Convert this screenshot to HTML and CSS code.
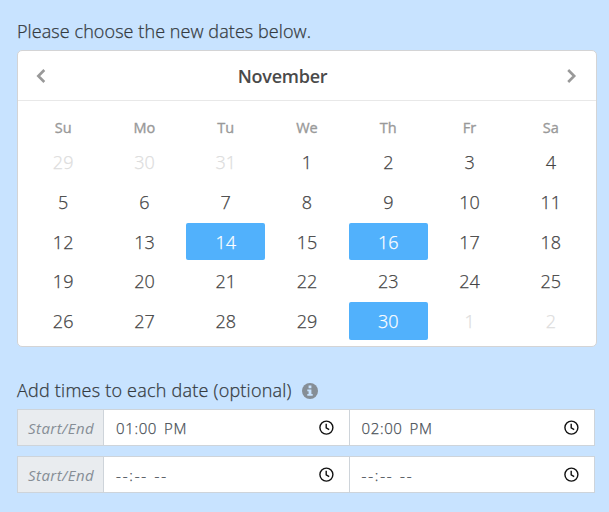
FILE: index.html
```html
<!DOCTYPE html>
<html lang="en">
<head>
    <meta charset="UTF-8">
    <meta name="viewport" content="width=device-width, initial-scale=1.0">
    <title>Choose dates</title>
    <link rel="stylesheet" href="styles.css">
</head>
<body>
    <div class="container">
        <div class="form-label"><span class="dates-label">Please choose the new dates below.</span></div>

        <!-- Calendar -->
        <div class="calendar">
            <div class="calendar-header">
                <svg class="arrow" viewBox="0 0 10 14"><path d="M8.3 1 2.3 7l6 6"/></svg>
                <div class="calendar-title">November</div>
                <svg class="arrow" viewBox="0 0 10 14"><path d="M1.2 1l6 6-6 6"/></svg>
            </div>
            <div class="weekdays">
                <div>Su</div><div>Mo</div><div>Tu</div><div>We</div><div>Th</div><div>Fr</div><div>Sa</div>
            </div>
            <div class="days">
                <div class="day muted">29</div>
                <div class="day muted">30</div>
                <div class="day muted">31</div>
                <div class="day">1</div>
                <div class="day">2</div>
                <div class="day">3</div>
                <div class="day">4</div>
                <div class="day">5</div>
                <div class="day">6</div>
                <div class="day">7</div>
                <div class="day">8</div>
                <div class="day">9</div>
                <div class="day">10</div>
                <div class="day">11</div>
                <div class="day">12</div>
                <div class="day">13</div>
                <div class="day selected">14</div>
                <div class="day">15</div>
                <div class="day selected">16</div>
                <div class="day">17</div>
                <div class="day">18</div>
                <div class="day">19</div>
                <div class="day">20</div>
                <div class="day">21</div>
                <div class="day">22</div>
                <div class="day">23</div>
                <div class="day">24</div>
                <div class="day">25</div>
                <div class="day">26</div>
                <div class="day">27</div>
                <div class="day">28</div>
                <div class="day">29</div>
                <div class="day selected">30</div>
                <div class="day muted">1</div>
                <div class="day muted">2</div>
            </div>
        </div>

        <!-- Times -->
        <div class="form-label times-row">
            <span class="times-label">Add times to each date (optional)</span>
            <svg class="info" viewBox="0 0 16 16"><circle cx="8" cy="8" r="8"/><path d="M6.6 2.6h2.8v2.6H6.6zM5.3 6.4h4.1v4.5h1.3v1.9H5.3v-1.9h1.3V8.2H5.3z"/></svg>
        </div>
        <div class="time-group">
            <div class="addon"><span>Start/End</span></div>
            <div class="time-input">
                <span class="time">01:00 PM</span>
                <svg class="clock" viewBox="0 0 16 16"><circle cx="8.4" cy="7.6" r="6.5"/><path d="M8.2 3.8v4.1l3 1.8"/></svg>
            </div>
            <div class="time-input">
                <span class="time">02:00 PM</span>
                <svg class="clock" viewBox="0 0 16 16"><circle cx="8.4" cy="7.6" r="6.5"/><path d="M8.2 3.8v4.1l3 1.8"/></svg>
            </div>
        </div>
        <div class="time-group">
            <div class="addon"><span>Start/End</span></div>
            <div class="time-input">
                <span class="time empty">--:-- --</span>
                <svg class="clock" viewBox="0 0 16 16"><circle cx="8.4" cy="7.6" r="6.5"/><path d="M8.2 3.8v4.1l3 1.8"/></svg>
            </div>
            <div class="time-input">
                <span class="time empty">--:-- --</span>
                <svg class="clock" viewBox="0 0 16 16"><circle cx="8.4" cy="7.6" r="6.5"/><path d="M8.2 3.8v4.1l3 1.8"/></svg>
            </div>
        </div>
    </div>
</body>
</html>
```
FILE: styles.css
```css
* {
    box-sizing: border-box;
}
body {
    margin: 0;
    background: #c8e3ff;
    color: #343a40;
    font-family: "Open Sans", "Noto Sans", sans-serif;
    font-weight: 300;
    font-size: 18px;
}
.container {
    width: 580px;
    margin-left: 17px;
    padding-top: 18px;
}
.form-label {
    height: 27px;
    line-height: 27px;
    margin-bottom: 5px;
    white-space: nowrap;
}
.form-label,
.day,
.time {
    -webkit-text-stroke: 0.25px currentColor;
}
.dates-label {
    letter-spacing: 0.08px;
}
.times-label {
    letter-spacing: 0.23px;
}
.calendar {
    height: 297px;
    background: #fff;
    border: 1px solid #d4d4d5;
    border-radius: 5px;
}
.calendar-header {
    display: grid;
    grid-template-columns: 10px 1fr 10px;
    align-items: center;
    height: 50px;
    padding: 0 19px 0 18px;
    border-bottom: 1px solid #e8e8e8;
}
.arrow {
    width: 10px;
    height: 14px;
    fill: none;
    stroke: #999;
    stroke-width: 2.6;
}
.calendar-title {
    padding-right: 48px;
    text-align: center;
    font-size: 18px;
    font-weight: 600;
    letter-spacing: -0.25px;
    color: #4a4a4a;
}
.weekdays,
.days {
    display: grid;
    grid-template-columns: repeat(7, 1fr);
    column-gap: 2.2px;
    padding: 0 5.6px;
    text-align: center;
}
.weekdays {
    margin-top: 16px;
    height: 26px;
    line-height: 21px;
    font-size: 14.5px;
    font-weight: 400;
    -webkit-text-stroke: 0.35px currentColor;
    color: #999;
}
.days {
    grid-auto-rows: 37.5px;
    row-gap: 2.25px;
}
.day {
    border-radius: 2px;
    line-height: 38px;
    color: #444;
}
.muted {
    color: #ddd;
}
.selected {
    background: #51b1fc;
    color: #fff;
}
.times-row {
    display: flex;
    align-items: center;
    margin-top: 30px;
    margin-bottom: 5px;
}
.info {
    width: 16px;
    height: 16px;
    margin-left: 10px;
    fill: #868e96;
}
.info path {
    fill: #c8e3ff;
    stroke: none;
}
.time-group {
    display: flex;
    width: 578px;
    height: 37px;
    margin-bottom: 10px;
    border: 1px solid #ced4da;
    background: #fff;
}
.addon {
    width: 86px;
    flex: none;
    line-height: 36px;
    padding-left: 10px;
    background: #e9ecef;
    border-right: 1px solid #ced4da;
    font-size: 15px;
    font-style: italic;
    font-weight: 400;
    letter-spacing: 0.45px;
    color: #868e96;
    white-space: nowrap;
}
.time-input {
    flex: 1;
    display: flex;
    align-items: center;
    justify-content: space-between;
    padding: 0 15px 0 12px;
    font-size: 15px;
    color: #495057;
}
.time-input + .time-input {
    border-left: 1px solid #ced4da;
}
.time {
    letter-spacing: 0.65px;
    word-spacing: 2.5px;
}
.empty {
    letter-spacing: 1.8px;
    word-spacing: 1px;
}
.clock {
    width: 16px;
    height: 16px;
    fill: none;
    stroke: #111;
    stroke-width: 1.4;
}
```
